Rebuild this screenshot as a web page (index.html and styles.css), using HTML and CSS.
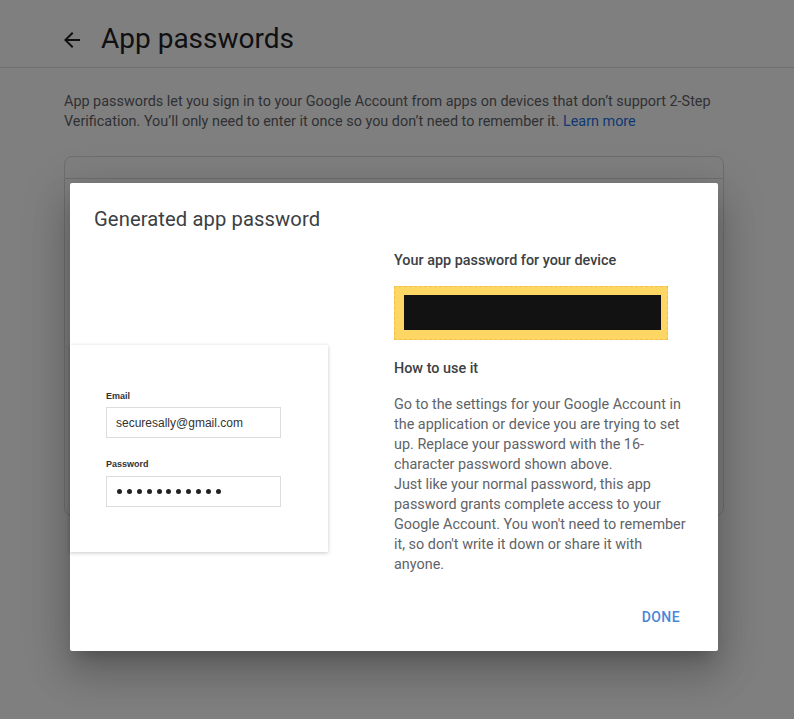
FILE: index.html
```html
<!DOCTYPE html>
<html>
<head>
<meta charset="utf-8">
<link rel="stylesheet" href="styles.css">
</head>
<body>
<div class="page">
  <header class="header">
    <svg class="back" width="24" height="24" viewBox="0 0 24 24"><path d="M20 11H7.83l5.59-5.59L12 4l-8 8 8 8 1.41-1.41L7.83 13H20v-2z" fill="#202124"/></svg>
    <h1 class="title">App passwords</h1>
  </header>
  <main class="main">
    <p class="desc">App passwords let you sign in to your Google Account from apps on devices that don’t support 2-Step Verification. You’ll only need to enter it once so you don’t need to remember it. <span class="link">Learn more</span></p>
    <div class="card">
      <div class="card-row"></div>
    </div>
  </main>
</div>
<div class="scrim"></div>
<div class="dialog">
  <h2 class="dialog-title">Generated app password</h2>
  <div class="dialog-body">
    <div class="left">
      <div class="illus">
        <div class="flabel">Email</div>
        <div class="finput">securesally@gmail.com</div>
        <div class="flabel flabel2">Password</div>
        <div class="finput dots">
          <span></span><span></span><span></span><span></span><span></span><span></span><span></span><span></span><span></span><span></span><span></span>
        </div>
      </div>
    </div>
    <div class="right">
      <div class="h3">Your app password for your device</div>
      <div class="pwbox"><div class="pwmask"></div></div>
      <div class="h3 how">How to use it</div>
      <p class="howtext">Go to the settings for your Google Account in the application or device you are trying to set up. Replace your password with the 16-character password shown above.<br>Just like your normal password, this app password grants complete access to your Google Account. You won't need to remember it, so don't write it down or share it with anyone.</p>
    </div>
  </div>
  <div class="actions"><span class="done">DONE</span></div>
</div>
</body>
</html>
```
FILE: styles.css
```css
* { box-sizing: border-box; }
html, body { margin: 0; padding: 0; }
body {
  width: 794px;
  height: 719px;
  overflow: hidden;
  background: #fff;
  font-family: Roboto, "Noto Sans", Arial, sans-serif;
  position: relative;
}
.header {
  height: 68px;
  border-bottom: 1px solid #dadce0;
  display: flex;
  align-items: center;
  padding: 0 0 0 60px;
}
.back { display: block; margin-top: 13px; }
.title {
  margin: 10px 0 0 17px;
  font-size: 28px;
  font-weight: 400;
  color: #202124;
  line-height: 36px;
}
.main { padding: 24px 0 0 64px; }
.desc {
  margin: 0;
  width: 680px;
  font-size: 14.4px;
  line-height: 20px;
  color: #5f6368;
}
.link { color: #1a73e8; }
.card {
  margin-top: 24px;
  width: 660px;
  height: 360px;
  border: 1px solid #dadce0;
  border-radius: 8px;
}
.card-row { height: 22px; border-bottom: 1px solid #dadce0; }
.scrim {
  position: absolute;
  inset: 0;
  background: rgba(0, 0, 0, 0.5);
}
.dialog {
  position: absolute;
  left: 70px;
  top: 183px;
  width: 648px;
  height: 468px;
  background: #fff;
  border-radius: 2px;
  box-shadow: 0 11px 15px -7px rgba(0,0,0,.2), 0 24px 38px 3px rgba(0,0,0,.14), 0 9px 46px 8px rgba(0,0,0,.12);
  display: flex;
  flex-direction: column;
}
.dialog-title {
  margin: 0;
  padding: 22px 24px 0;
  font-size: 20.2px;
  font-weight: 400;
  line-height: 28px;
  color: #3c4043;
  letter-spacing: 0.1px;
}
.dialog-body {
  display: flex;
  gap: 66px;
  margin-top: 18px;
}
.left { width: 258px; padding-top: 94px; }
.illus {
  width: 258px;
  height: 207px;
  background: #fff;
  box-shadow: 0 1px 4px rgba(0,0,0,.22);
  padding: 45px 0 0 36px;
  font-family: "Liberation Sans", Arial, sans-serif;
}
.flabel {
  font-size: 9px;
  line-height: 12px;
  font-weight: 700;
  color: #333;
}
.flabel2 { margin-top: 20px; }
.finput {
  margin-top: 5px;
  width: 175px;
  height: 31px;
  border: 1px solid #dcdcdc;
  font-size: 12px;
  color: #333;
  display: flex;
  align-items: center;
  padding-left: 9px;
}
.dots { gap: 4.9px; margin-top: 6px; padding-left: 10px; }
.dots span {
  width: 5px;
  height: 5px;
  border-radius: 50%;
  background: #222;
}
.right { width: 300px; }
.h3 {
  font-size: 14.4px;
  line-height: 20px;
  font-weight: 500;
  color: #3c4043;
}
.pwbox {
  margin-top: 15px;
  width: 274px;
  height: 54px;
  background: #fdd663;
  border: 1px dashed #f0c04a;
  padding: 8px 6px 9px 9px;
}
.pwmask { width: 257px; height: 35px; background: #121212; }
.how { margin-top: 19px; }
.howtext {
  margin: 16px 0 0;
  font-size: 14.4px;
  line-height: 20px;
  color: #5f6368;
}
.actions {
  margin-top: auto;
  display: flex;
  justify-content: flex-end;
  padding: 0 38px 24px 0;
}
.done {
  font-size: 14px;
  font-weight: 500;
  letter-spacing: 0.4px;
  line-height: 20px;
  color: #4a86d8;
}
```
